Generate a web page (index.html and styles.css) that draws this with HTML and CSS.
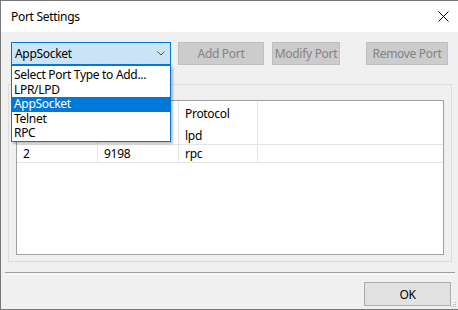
FILE: index.html
```html
<!DOCTYPE html>
<html lang="en">
<head>
  <meta charset="UTF-8" />
  <title>Port Settings</title>
  <link rel="stylesheet" href="styles.css">
</head>
<body>

  <div class="window">
    <!-- Title bar -->
    <div class="titlebar">
      <span class="title">Port Settings</span>
      <svg class="close" width="11" height="11" viewBox="0 0 11 11">
        <path d="M0.5 0.5 L10.5 10.5 M10.5 0.5 L0.5 10.5" stroke="#000" stroke-width="1" fill="none"/>
      </svg>
    </div>

    <div class="client">
      <div class="toolbar">
        <div class="combo">
          <span>AppSocket</span>
          <svg width="8" height="5" viewBox="0 0 8 5">
            <polyline points="0.5,0.5 4,4 7.5,0.5" stroke="#555" stroke-width="1" fill="none"/>
          </svg>
          <ul class="combo-list">
            <li>Select Port Type to Add...</li>
            <li>LPR/LPD</li>
            <li class="selected">AppSocket</li>
            <li>Telnet</li>
            <li>RPC</li>
          </ul>
        </div>
        <button class="btn btn-add" disabled>Add Port</button>
        <button class="btn btn-modify" disabled>Modify Port</button>
        <button class="btn btn-remove" disabled>Remove Port</button>
      </div>

      <div class="group">
        <div class="listview">
          <!-- first two columns sit under the open drop-down -->
          <div class="lv-row lv-head">
            <div class="cell"></div>
            <div class="cell"></div>
            <div class="cell">Protocol</div>
            <div class="cell"></div>
          </div>
          <div class="lv-row">
            <div class="cell"></div>
            <div class="cell"></div>
            <div class="cell">lpd</div>
            <div class="cell"></div>
          </div>
          <div class="lv-row">
            <div class="cell">2</div>
            <div class="cell">9198</div>
            <div class="cell">rpc</div>
            <div class="cell"></div>
          </div>
        </div>
      </div>

      <div class="separator"></div>

      <div class="footer">
        <button class="btn-ok">OK</button>
      </div>

      <!-- resize grip -->
      <svg class="grip" width="6" height="6" viewBox="0 0 6 6">
        <rect x="4" y="0" width="1" height="1" fill="#b0b0b0"/>
        <rect x="2" y="2" width="1" height="1" fill="#b0b0b0"/>
        <rect x="4" y="2" width="1" height="1" fill="#b0b0b0"/>
        <rect x="0" y="4" width="1" height="1" fill="#b0b0b0"/>
        <rect x="2" y="4" width="1" height="1" fill="#b0b0b0"/>
        <rect x="4" y="4" width="1" height="1" fill="#b0b0b0"/>
      </svg>
    </div>
  </div>

</body>
</html>
```

FILE: styles.css
```css
body {
  margin: 0;
  font-family: "Noto Sans", "Open Sans", sans-serif;
  font-size: 12px;
  letter-spacing: -0.3px;
  color: #000;
  background: #fff;
}

.window {
  width: 458px;
  height: 310px;
  box-sizing: border-box;
  border-top: 1px solid #777;
  border-left: 1px solid #777;
  border-bottom: 1px solid #777;
  display: flex;
  flex-direction: column;
}

/* Title bar */
.titlebar {
  height: 31px;
  flex-shrink: 0;
  background: #fff;
  display: flex;
  align-items: center;
  justify-content: space-between;
  padding: 0 9px 0 10px;
}

.title {
  font-size: 12px;
}

.close {
  display: block;
}

/* Client area */
.client {
  flex: 1;
  background: #f0f0f0;
  position: relative;
  display: flex;
  flex-direction: column;
}

.toolbar {
  display: flex;
  margin: 10px 0 0 10px;
  height: 23px;
}

.combo {
  position: relative;
  width: 160px;
  height: 23px;
  box-sizing: border-box;
  border: 1px solid #0078d7;
  background: #cce4f7;
  display: flex;
  align-items: center;
  justify-content: space-between;
  padding: 0 5px 0 3px;
}

.combo-list {
  position: absolute;
  left: -1px;
  top: 22px;
  width: 160px;
  box-sizing: border-box;
  margin: 0;
  padding: 2px 0 0 0;
  list-style: none;
  background: #fff;
  border: 1px solid #0078d7;
  box-shadow: 2px 2px 2px rgba(0, 0, 0, 0.25);
  z-index: 5;
}

.combo-list li {
  height: 14.5px;
  line-height: 14.5px;
  padding-left: 2px;
  white-space: nowrap;
}

.combo-list li.selected {
  background: #0078d7;
  color: #fff;
}

.btn {
  height: 23px;
  box-sizing: border-box;
  border: 1px solid #bfbfbf;
  background: #cccccc;
  color: #838383;
  font-family: inherit;
  font-size: 12px;
  letter-spacing: inherit;
  padding: 0;
}

.btn-add {
  width: 86px;
  margin-left: 7px;
}

.btn-modify {
  width: 68px;
  margin-left: 8px;
}

.btn-remove {
  width: 82px;
  margin-left: 26px;
}

/* Group box with list view */
.group {
  margin: 19px 0 0 7px;
  width: 444px;
  height: 178px;
  box-sizing: border-box;
  border: 1px solid #dcdcdc;
  padding: 15px 0 0 7px;
}

.listview {
  width: 428px;
  height: 155px;
  box-sizing: border-box;
  border: 1px solid #a0a0a0;
  background: #fff;
}

.lv-row {
  display: grid;
  grid-template-columns: 81px 81px 79px 1fr;
  height: 19px;
  box-sizing: border-box;
  border-bottom: 1px solid #e5e5e5;
}

.lv-row.lv-head {
  height: 25px;
  border-bottom: none;
}

.lv-row + .lv-row + .lv-row {
  height: 18px;
}

.cell {
  border-right: 1px solid #e5e5e5;
  padding-left: 6px;
  display: flex;
  align-items: center;
  white-space: nowrap;
}

.cell:last-child {
  border-right: none;
}

.separator {
  margin: 10px 0 0 4px;
  width: 450px;
  height: 1px;
  border-top: 1px solid #a0a0a0;
  border-bottom: 1px solid #fff;
}

.footer {
  display: flex;
  justify-content: flex-end;
  margin: 7px 7px 0 0;
}

.btn-ok {
  width: 87px;
  height: 24px;
  box-sizing: border-box;
  border: 1px solid #adadad;
  background: #e1e1e1;
  font-family: inherit;
  font-size: 12px;
  letter-spacing: inherit;
  color: #000;
  padding: 0;
}

.grip {
  position: absolute;
  right: 1px;
  bottom: 1px;
}
```
